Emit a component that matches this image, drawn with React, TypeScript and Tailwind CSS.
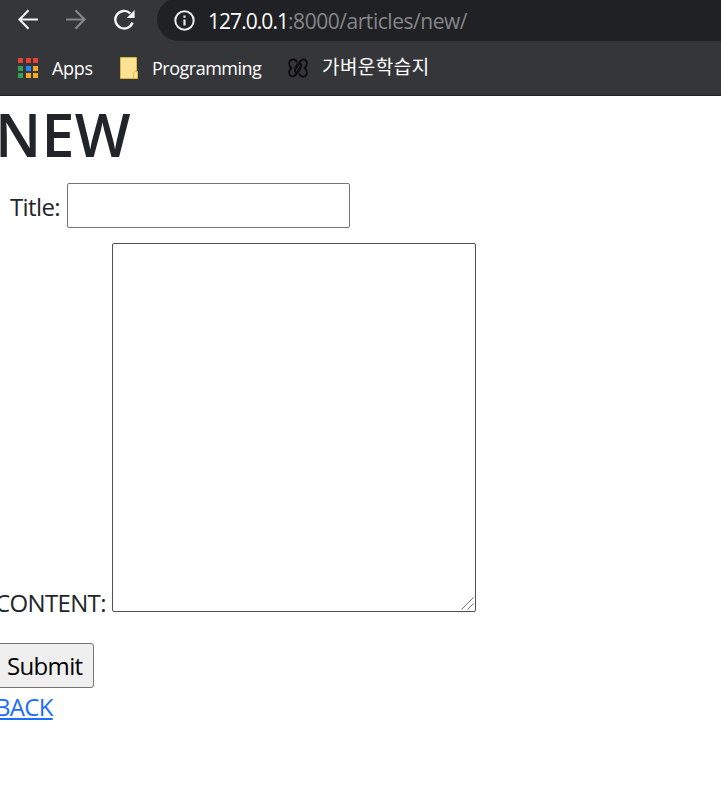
import React from "react";

const APP_DOTS = [
  "#e94235", "#e94235", "#e94235",
  "#34a056", "#2684fc", "#f5a623",
  "#34a056", "#f5a623", "#f5a623",
];

function BackIcon() {
  return (
    <svg className="block h-[22px] w-[22px] shrink-0" viewBox="0 0 22 22" fill="none" stroke="#f1f3f4" strokeWidth="2.2">
      <path d="M20 10.500H2M10.500 1.200L1.500 10.500l9 9.300" />
    </svg>
  );
}

function ForwardIcon() {
  return (
    <svg className="block h-[22px] w-[22px] shrink-0" viewBox="0 0 22 22" fill="none" stroke="#85868a" strokeWidth="2.2">
      <path d="M0 10.500h18M9.500 1.200l9 9.300-9 9.300" />
    </svg>
  );
}

function ReloadIcon() {
  return (
    <svg className="block h-[22px] w-[22px] shrink-0" viewBox="0 0 22 22">
      <path d="M18.500 13.500A8.800 8.800 0 1 1 16.300 4.400" fill="none" stroke="#f1f3f4" strokeWidth="2.4" />
      <path d="M20.600 1v8h-8z" fill="#f1f3f4" />
    </svg>
  );
}

function InfoIcon() {
  return (
    <svg className="block h-[22px] w-[22px] shrink-0" viewBox="0 0 22 22">
      <circle cx="10.5" cy="10.5" r="9.2" fill="none" stroke="#e8eaed" strokeWidth="2" />
      <path d="M9.4 5.500h2.200v2.200H9.400zM9.400 9.400h2.200v6.200H9.400z" fill="#e8eaed" />
    </svg>
  );
}

function FolderIcon() {
  return (
    <svg className="block h-[22px] w-[18px] shrink-0" viewBox="0 0 18 22">
      <path d="M0.500 0.500h16v14h1v7h-17z" fill="#fde293" stroke="#dcb641" />
      <path d="M13.500 21.500v-6l1.500-1.500h1.500" fill="none" stroke="#dcb641" />
    </svg>
  );
}

function KnotIcon() {
  return (
    <svg className="block h-[20px] w-[20px] shrink-0" viewBox="0 0 20 20" fill="none" stroke="#0c0c0d" strokeWidth="2">
      <path d="M9 4.500C8 1.300 4 .5 2.200 2.600.4 4.700 1.200 8 3.300 10 1.200 12 .4 15.300 2.200 17.400 4 19.500 7 18.500 8.500 15.500L12.800 8.500C13.500 6.500 12.300 5.300 11 5.600 9.500 6 8.300 8 7.500 10" />
      <path d="M11 15.500C12 18.700 16 19.500 17.800 17.400 19.600 15.300 18.800 12 16.700 10 18.800 8 19.600 4.700 17.800 2.600 16 .5 13 1.500 11.500 4.500L7.200 11.500C6.500 13.500 7.700 14.700 9 14.400 10.500 14 11.700 12 12.500 10" />
    </svg>
  );
}

function BrowserBar() {
  return (
    <header className="h-24 border-b border-[#202124] bg-[#35363a] whitespace-nowrap">
      <div className="flex h-[41px] pl-[18px]">
        <div className="flex w-[139px] shrink-0 gap-[26px] pt-[9px]">
          <BackIcon />
          <ForwardIcon />
          <ReloadIcon />
        </div>
        <div className="-mt-[2px] flex h-[43px] flex-1 rounded-l-full bg-[#202124] pl-[17px]">
          <div className="pt-[12px]"><InfoIcon /></div>
          <span className="ml-[12px] pt-[2px] text-[21px] leading-[42px] tracking-[-0.46px] text-[#85868a]">
            <span className="tracking-[-0.95px] text-white">127.0.0.1</span>:8000/articles/new/
          </span>
        </div>
      </div>
      <nav className="flex h-[54px] items-center pl-[18px] text-[18px] leading-[24px] text-white">
        <div className="grid w-[34px] grid-cols-[5px_5px_5px] gap-[2.5px]">
          {APP_DOTS.map((c, i) => (
            <i key={i} className="h-[5px] w-[5px]" style={{ backgroundColor: c }} />
          ))}
        </div>
        <span className="-mt-px w-[68px] tracking-[-0.3px]">Apps</span>
        <FolderIcon />
        <span className="-mt-px ml-[14px] w-[136px] tracking-[-0.5px]">Programming</span>
        <KnotIcon />
        <span className="-mt-[3px] ml-[14px] text-[19px] tracking-[0.45px]">가벼운학습지</span>
      </nav>
    </header>
  );
}

export default function App() {
  return (
    <div className="h-[796px] w-[721px] overflow-hidden bg-white font-['Open_Sans','Noto_Sans_CJK_KR',sans-serif] text-[24px] text-[#212529]">
      <BrowserBar />
      <main className="whitespace-nowrap">
        <h1 className="-ml-[5px] h-[87px] text-[59px] leading-[77px] font-semibold tracking-[0.3px]">NEW</h1>
        <form>
          <div className="flex h-[60px] pl-[10px]">
            <label htmlFor="title" className="w-[57px] shrink-0 leading-[48px] tracking-[-0.6px]">Title:</label>
            <input id="title" className="h-[45px] w-[283px] rounded-[2px] border border-[#767676] bg-white px-2 outline-none" />
          </div>
          <div className="flex h-[400px]">
            <label htmlFor="content" className="-ml-[5px] w-[117px] shrink-0 pt-[340px] leading-[40px] tracking-[-0.65px]">CONTENT:</label>
            <div className="relative h-[369px] w-[364px]">
              <textarea id="content" className="block h-full w-full resize-none rounded-[2px] border border-[#505050] bg-white outline-none" />
              <svg className="absolute right-[2px] bottom-[2px] h-[13px] w-[13px]" viewBox="0 0 13 13" stroke="#505050" fill="none">
                <path d="M0.500 12.500l12-12M6.500 12.500l6-6" strokeWidth="0.8" />
              </svg>
            </div>
          </div>
          <button type="button" className="-ml-[5px] block h-[45px] w-[99px] rounded-[3px] border border-[#767676] bg-[#efefef] pl-[11px] text-left leading-[44px] tracking-[-0.65px] text-black">Submit</button>
        </form>
        <a href="#back" className="-ml-[5px] block leading-[38px] tracking-[-0.7px] text-[#1a6dfd] underline decoration-2 underline-offset-[2px]">BACK</a>
      </main>
    </div>
  );
}
